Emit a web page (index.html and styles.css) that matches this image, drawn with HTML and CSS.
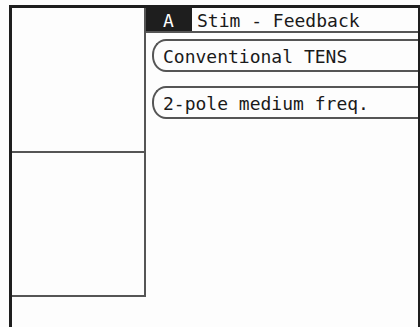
FILE: index.html
```html
<!DOCTYPE html>
<html><head><meta http-equiv="Content-Type" content="text/html; charset=UTF-8">
<link rel="stylesheet" href="styles.css">
</head>
<body>
<div class="screen">
    <div class="side">
        <div class="cell top"></div>
        <div class="cell bottom"></div>
    </div>
    <div class="main">
        <div class="header">
            <span class="tag">A</span>
            <span class="title">Stim - Feedback</span>
        </div>
        <div class="btn">Conventional TENS</div>
        <div class="btn">2-pole medium freq.</div>
    </div>
</div>
</body></html>
```
FILE: styles.css
```css
body {
background-color: #fdfdfd;
color: #1a1a1a;
font-family: "DejaVu Sans Mono", monospace;
margin: 0;
padding: 0;
}

.screen {
display: flex;
margin-top: 5px;
margin-left: 9px;
width: 406px;
height: 319px;
border-top: 3px solid #1e1e1e;
border-left: 3px solid #1e1e1e;
border-right: 2px solid #1e1e1e;
}

.side {
width: 132px;
flex-shrink: 0;
border-right: 2px solid #555;
align-self: flex-start;
}

.cell {
border-bottom: 2px solid #555;
}

.cell.top {
height: 143px;
}

.cell.bottom {
height: 142px;
}

.main {
flex: 1;
display: flex;
flex-direction: column;
}

.header {
display: flex;
height: 23px;
border-bottom: 2px solid #555;
font-size: 18px;
line-height: 25px;
}

.tag {
background-color: #1e1e1e;
color: #fdfdfd;
width: 46px;
padding-left: 17px;
box-sizing: border-box;
}

.title {
padding-left: 5px;
}

.btn {
margin-top: 6px;
margin-left: 6px;
height: 29px;
line-height: 32px;
padding-left: 9px;
font-size: 18px;
border: 2px solid #555;
border-right: none;
border-radius: 14px 0 0 14px / 16px 0 0 16px;
}

.btn + .btn {
margin-top: 14px;
}
```
